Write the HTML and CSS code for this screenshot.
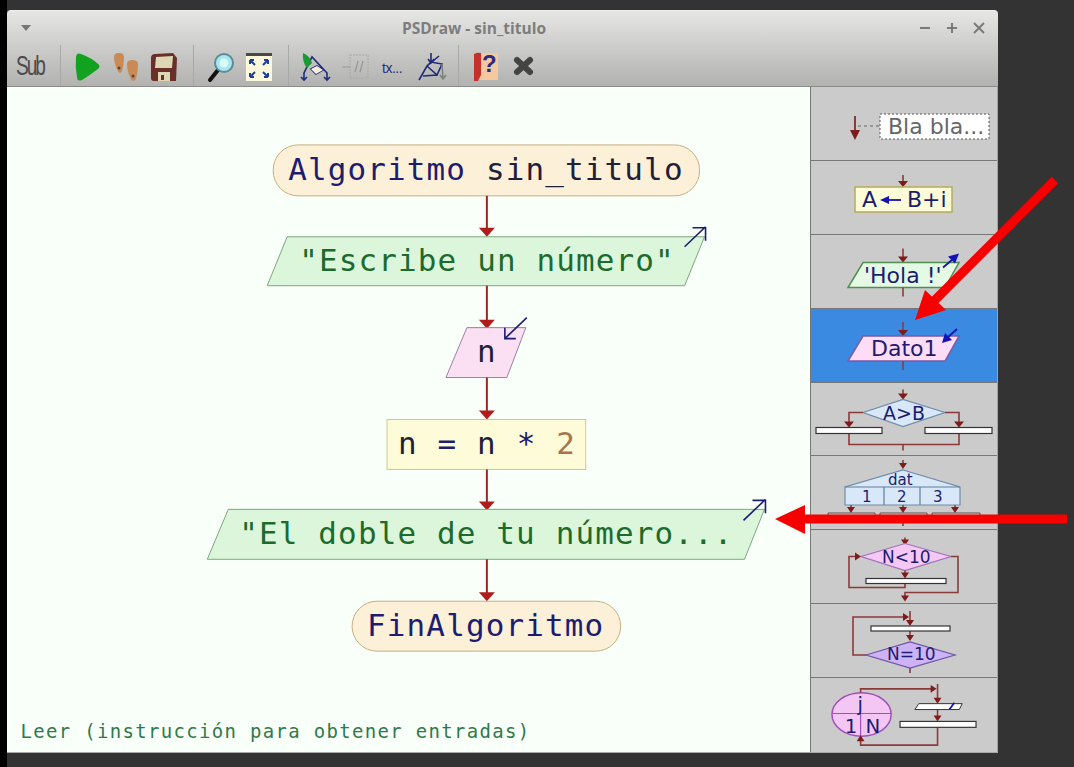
FILE: index.html
```html
<!DOCTYPE html>
<html lang="es">
<head>
    <meta charset="utf-8">
    <meta name="viewport" content="width=device-width, initial-scale=1.0">
    <title>PSDraw - sin_titulo</title>
    <link rel="stylesheet" href="styles.css">
</head>
<body>
    <div class="window">
        <header class="top">
            <div class="titlebar">
                <svg class="caret" width="10" height="6" viewBox="0 0 10 6"><polygon points="0,0 10,0 5,6"/></svg>
                <span class="title">PSDraw - sin_titulo</span>
                <div class="controls">
                    <svg width="12" height="12" viewBox="0 0 12 12"><path d="M1 6H11"/></svg>
                    <svg width="12" height="12" viewBox="0 0 12 12"><path d="M1 6H11M6 1V11"/></svg>
                    <svg width="12" height="12" viewBox="0 0 12 12"><path d="M1 1L11 11M11 1L1 11"/></svg>
                </div>
            </div>
            <div class="toolbar">
                <div class="group"><span class="sub">Sub</span></div>
                <div class="group">
                    <svg class="icon" viewBox="0 0 28 32"><path class="i-play" d="M2 8Q2 2 7 4Q18 8 24 14Q27 16 24 19Q16 25 8 30Q3 32 3 27Q1 17 2 8Z"/></svg>
                    <svg class="icon" viewBox="0 0 28 32">
                        <path class="i-foot" d="M2 7Q2 3 7 3Q12 3 12 7Q12 14 10 21Q8 25 6 21Q2 14 2 7Z"/>
                        <path class="i-foot" d="M15 14Q15 10 20 10Q26 10 26 14Q26 22 24 29Q21 33 19 29Q15 22 15 14Z"/>
                        <circle class="i-dark" cx="7" cy="18" r="1.5"/>
                        <circle class="i-dark" cx="21" cy="26" r="1.5"/>
                    </svg>
                    <svg class="icon" viewBox="0 0 28 32">
                        <path class="i-disk" d="M1 8Q1 4 5 4L23 3L27 8L26 31H4Q1 31 1 28Z"/>
                        <path class="i-label" d="M6 7L23 6L22 18L5 18Z"/>
                        <rect class="i-label" x="8" y="22" width="12" height="9"/>
                        <rect class="i-disk" x="11" y="25" width="3" height="5"/>
                    </svg>
                </div>
                <div class="group">
                    <svg class="icon" viewBox="0 0 28 32">
                        <path class="i-handle" d="M3 30L11 20"/>
                        <circle class="i-lens" cx="17" cy="13" r="9"/>
                        <circle class="i-shine" cx="17" cy="13" r="4.5"/>
                    </svg>
                    <svg class="icon" viewBox="0 0 28 32">
                        <rect class="i-fit" x="1" y="5" width="26" height="26"/>
                        <rect class="i-band" x="1" y="3" width="26" height="3"/>
                        <path class="i-blue" d="M5 10L10 15M5 10H9M5 10V14M23 10L18 15M23 10H19M23 10V14M5 27L10 22M5 27H9M5 27V23M23 27L18 22M23 27H19M23 27V23"/>
                    </svg>
                </div>
                <div class="group wide">
                    <svg class="icon" viewBox="0 0 28 32">
                        <path class="i-line" d="M2 30V23L10 7L25 23V30M9 19L15 16L21 20L14 24Z"/>
                        <path class="i-line" d="M-1 27L2 30L5 27M22 27L25 30L28 27"/>
                        <polygon class="i-white" points="9,19 15,16 21,20 14,24"/>
                        <path class="i-leaf" d="M1 3Q8 6 10 13L5 18Q0 12 1 3Z"/>
                    </svg>
                    <svg class="icon" viewBox="0 0 28 32">
                        <path class="i-faint" d="M9 5H27V28H9Z"/>
                        <path class="i-faintline" d="M1 17H9M14 22L17 11M19 22L22 11"/>
                    </svg>
                    <svg class="icon" viewBox="0 0 28 32"><text class="i-text" x="2" y="23">tx...</text></svg>
                    <svg class="icon" viewBox="0 0 28 32">
                        <path class="i-line" d="M0 30L8 16L20 6M8 16L18 25L23 14L12 12ZM18 25L4 26M12 3V13M9 9L12 13L15 9"/>
                        <path class="i-grey" d="M23 14L24 29M21 25L24 29L27 25"/>
                    </svg>
                </div>
                <div class="group last">
                    <svg class="icon" viewBox="0 0 28 32">
                        <rect class="i-book" x="3" y="3" width="23" height="27"/>
                        <path class="i-spine" d="M2 4Q6 2 9 3V25L6 31L2 31Z"/>
                        <text class="i-help" x="10" y="22">?</text>
                    </svg>
                    <svg class="icon" viewBox="0 0 28 32"><path class="i-x" d="M7 10L20 22M20 10L7 22"/></svg>
                </div>
            </div>
        </header>

        <main class="main">
            <div class="canvas">
                <svg class="chart" viewBox="7 87 803 665">
                    <rect class="term" x="273" y="145" width="427" height="51" rx="25"/>
                    <text class="code" x="288" y="180"><tspan class="navy">Algoritmo</tspan> <tspan class="ink">sin_titulo</tspan></text>

                    <path class="flow" d="M487 196V229"/>
                    <polygon class="head" points="479,228 495,228 487,237"/>

                    <polygon class="output" points="287,237 705,237 685,286 267,286"/>
                    <text class="code green" x="299" y="271">"Escribe un número"</text>
                    <path class="mark" d="M685 247L706 227M693 228H706V241"/>

                    <path class="flow" d="M487 286V321"/>
                    <polygon class="head" points="479,320 495,320 487,329"/>

                    <polygon class="input" points="467,328 526,328 507,378 446,378"/>
                    <text class="code ink" x="477" y="362">n</text>
                    <path class="mark" d="M527 318L505 339M505 328V339H516"/>

                    <path class="flow" d="M487 378V412"/>
                    <polygon class="head" points="479,411 495,411 487,420"/>

                    <rect class="assign" x="387" y="420" width="199" height="50"/>
                    <text class="code ink" x="398" y="455">n <tspan class="navy">=</tspan> n <tspan class="navy">*</tspan> <tspan class="num">2</tspan></text>

                    <path class="flow" d="M487 470V503"/>
                    <polygon class="head" points="479,502 495,502 487,511"/>

                    <polygon class="output" points="228,510 765,510 745,560 207,560"/>
                    <text class="code green" x="239" y="545">"El doble de tu número...</text>
                    <path class="mark" d="M744 521L766 500M753 501H766V514"/>

                    <path class="flow" d="M487 560V594"/>
                    <polygon class="head" points="479,593 495,593 487,602"/>

                    <rect class="term" x="352" y="602" width="269" height="50" rx="25"/>
                    <text class="code navy" x="367" y="637">FinAlgoritmo</text>

                    <text class="status" x="20" y="739">Leer (instrucción para obtener entradas)</text>
                </svg>
            </div>

            <aside class="palette">
                <div class="item">
                    <svg viewBox="810 87 188 74">
                        <path class="p-flow thick" d="M855 116V132"/>
                        <polygon class="p-head" points="850,130 860,130 855,140"/>
                        <path class="p-dash" d="M858 126H880"/>
                        <rect class="p-note" x="880" y="114" width="109" height="25"/>
                        <text class="p-text grey" x="888" y="134">Bla bla...</text>
                    </svg>
                </div>
                <div class="item">
                    <svg viewBox="810 161 188 74">
                        <path class="p-flow" d="M903 175V183"/>
                        <polygon class="p-head" points="898,181 908,181 903,187"/>
                        <rect class="p-assign" x="855" y="187" width="97" height="25"/>
                        <text class="p-text navy" x="862" y="207">A</text>
                        <path class="p-blue" d="M884 200H901"/>
                        <polygon class="p-bluehead" points="880,200 889,196 889,204"/>
                        <text class="p-text navy" x="907" y="207">B+i</text>
                    </svg>
                </div>
                <div class="item">
                    <svg viewBox="810 235 188 73">
                        <path class="p-flow" d="M903 248V258"/>
                        <polygon class="p-head" points="898,256 908,256 903,262"/>
                        <polygon class="p-output" points="863,262 959,262 945,287 848,287"/>
                        <text class="p-text navy" x="864" y="282">'Hola !'</text>
                        <path class="p-flow" d="M903 287V296"/>
                        <path class="p-blue" d="M943 267L956 256"/>
                        <polygon class="p-bluehead" points="959,253 948,256 955,263"/>
                    </svg>
                </div>
                <div class="item selected">
                    <svg viewBox="810 309 188 74">
                        <path class="p-flow" d="M903 322V332"/>
                        <polygon class="p-head" points="898,330 908,330 903,336"/>
                        <polygon class="p-input" points="863,336 959,336 945,361 848,361"/>
                        <text class="p-text navy" x="871" y="356">Dato1</text>
                        <path class="p-flow" d="M903 361V370"/>
                        <path class="p-blue" d="M957 329L946 339"/>
                        <polygon class="p-bluehead" points="942,343 945,333 952,340"/>
                    </svg>
                </div>
                <div class="item">
                    <svg viewBox="810 383 188 73">
                        <path class="p-flow" d="M903 389V395"/>
                        <polygon class="p-head" points="898,393 908,393 903,399"/>
                        <polygon class="p-decide" points="863,412 903,399 945,412 903,426"/>
                        <text class="p-cond large navy" x="883" y="419">A&gt;B</text>
                        <path class="p-flow" d="M863 412H849V423M945 412H959V423M849 433V444H959V433M903 444V450"/>
                        <polygon class="p-head" points="844,421 854,421 849,427"/>
                        <polygon class="p-head" points="954,421 964,421 959,427"/>
                        <rect class="p-bar" x="816" y="427" width="66" height="6"/>
                        <rect class="p-bar" x="925" y="427" width="67" height="6"/>
                    </svg>
                </div>
                <div class="item">
                    <svg viewBox="810 456 188 74">
                        <path class="p-flow" d="M903 460V465"/>
                        <polygon class="p-head" points="899,463 907,463 903,469"/>
                        <polygon class="p-decide" points="903,470 960,487 960,505 845,505 845,487"/>
                        <path class="p-cell" d="M845 487H960M884 487V505M920 487V505"/>
                        <text class="p-small navy" x="888" y="485">dat</text>
                        <text class="p-small navy" x="862" y="502">1</text>
                        <text class="p-small navy" x="897" y="502">2</text>
                        <text class="p-small navy" x="933" y="502">3</text>
                        <path class="p-flow" d="M851 505V509M903 505V509M955 505V509M903 520V526"/>
                        <polygon class="p-head" points="847,507 855,507 851,513"/>
                        <polygon class="p-head" points="899,507 907,507 903,513"/>
                        <polygon class="p-head" points="951,507 959,507 955,513"/>
                        <path class="p-box" d="M828 520V513H875V520M880 520V513H927V520M932 520V513H980V520"/>
                    </svg>
                </div>
                <div class="item">
                    <svg viewBox="810 530 188 73">
                        <path class="p-flow" d="M905 537V541"/>
                        <polygon class="p-head" points="901,539 909,539 905,545"/>
                        <polygon class="p-while" points="861,556 905,543 951,556 905,570"/>
                        <text class="p-cond navy" x="882" y="562">N&lt;10</text>
                        <path class="p-flow" d="M905 570V574M905 583V587H849V556H856M951 556H958V592H905V597"/>
                        <polygon class="p-head" points="901,572 909,572 905,578"/>
                        <polygon class="p-head" points="855,552 861,556 855,560"/>
                        <polygon class="p-head" points="901,595 909,595 905,601"/>
                        <rect class="p-bar" x="866" y="578" width="80" height="5"/>
                    </svg>
                </div>
                <div class="item">
                    <svg viewBox="810 603 188 74">
                        <path class="p-flow" d="M910 610V621M904 616H853V654H867M910 630V636M910 667V672"/>
                        <polygon class="p-head" points="903,612 909,616 903,620"/>
                        <polygon class="p-head" points="906,619 914,619 910,625"/>
                        <polygon class="p-head" points="906,634 914,634 910,640"/>
                        <rect class="p-bar" x="871" y="625" width="79" height="5"/>
                        <polygon class="p-until" points="866,654 910,641 955,654 910,667"/>
                        <text class="p-cond navy" x="887" y="659">N=10</text>
                    </svg>
                </div>
                <div class="item">
                    <svg viewBox="810 677 188 75">
                        <ellipse class="p-for" cx="861" cy="714" rx="30" ry="22"/>
                        <path class="p-forline" d="M831 713H891M860 713V736"/>
                        <text class="p-for-text navy" x="857" y="710">j</text>
                        <text class="p-for-text navy" x="844" y="733">1</text>
                        <text class="p-for-text navy" x="865" y="733">N</text>
                        <path class="p-flow" d="M860 692V688H932M938 683V698M938 709V716M938 727V745H860V740"/>
                        <polygon class="p-head" points="931,684 937,688 931,692"/>
                        <polygon class="p-head" points="934,697 942,697 938,703"/>
                        <polygon class="p-head" points="934,715 942,715 938,721"/>
                        <polygon class="p-head" points="856,741 864,741 860,735"/>
                        <polygon class="p-step" points="919,703 963,703 960,709 915,709"/>
                        <path class="p-blue" d="M950 709L955 702"/>
                        <rect class="p-bar" x="900" y="721" width="77" height="6"/>
                    </svg>
                </div>
            </aside>
        </main>
    </div>

    <svg class="callouts" width="1074" height="767" viewBox="0 0 1074 767">
        <path class="callout" d="M1055 180L930 305"/>
        <polygon class="callout-head" points="915,320 925,290 946,310"/>
        <path class="callout" d="M1067 519H800"/>
        <polygon class="callout-head" points="775,519 805,505 805,534"/>
    </svg>
</body>
</html>
```

FILE: styles.css
```css
body {
    margin: 0;
    width: 1067px;
    height: 767px;
    padding-top: 10px;
    box-sizing: border-box;
    border-left: 7px solid #000;
    background-color: #333;
    overflow: hidden;
    font-family: "Open Sans", "Liberation Sans", sans-serif;
}

.window {
    width: 991px;
    height: 742px;
    display: flex;
    flex-direction: column;
    border-bottom: 1px solid #aaa;
}

.top {
    height: 77px;
    flex: none;
    box-sizing: border-box;
    border-top: 1px solid #eee;
    border-bottom: 1px solid #8b8b88;
    border-radius: 4px 4px 0 0;
    background: linear-gradient(#e6e6e5, #c6c6c5 60%, #b2b2b0);
}

.titlebar {
    height: 34px;
    padding: 0 13px 0 14px;
    display: flex;
    align-items: center;
    justify-content: space-between;
}

.caret {
    fill: #777;
}

.title {
    position: relative;
    left: -1px;
    font-size: 15.5px;
    font-weight: 700;
    color: #7d7d7d;
}

.controls {
    display: flex;
    gap: 15px;
}

.controls path {
    fill: none;
    stroke: #7a7a7a;
    stroke-width: 2;
}

.toolbar {
    height: 41px;
    padding-left: 9px;
    display: flex;
    align-items: center;
}

.group {
    height: 100%;
    padding: 0 15px 0 13px;
    display: flex;
    align-items: center;
    gap: 10px;
    border-right: 1px solid #a8a8a6;
}

.group:first-child {
    padding: 0 16px 0 0;
}

.group.wide {
    gap: 11px;
    padding-right: 11px;
}

.group.last {
    border-right: 0;
}

.sub {
    width: 28px;
    font-family: "Liberation Sans", sans-serif;
    font-size: 28px;
    letter-spacing: -3px;
    color: #4c4c4c;
    transform: scaleX(0.68);
    transform-origin: left center;
}

.icon {
    width: 28px;
    height: 32px;
    flex: none;
    overflow: visible;
}

.i-play { fill: #11a31f; }
.i-foot { fill: #c98a56; }
.i-dark { fill: #5d4030; }
.i-disk { fill: #6a2f2b; }
.i-label { fill: #ddd7b4; }
.i-handle { stroke: #111; stroke-width: 4; stroke-linecap: round; }
.i-lens { fill: #a9e6ee; stroke: #5b8a9a; stroke-width: 2; }
.i-shine { fill: #d8fbfb; }
.i-fit { fill: #fbf8dc; }
.i-band { fill: #4a4a44; }
.i-blue { fill: none; stroke: #1d3f9a; stroke-width: 2; }
.i-line { fill: none; stroke: #1e2a7a; stroke-width: 1.6; }
.i-white { fill: #f4f0d8; }
.i-leaf { fill: #1a9a32; }
.i-faint { fill: none; stroke: #a8a8a4; stroke-width: 1; stroke-dasharray: 2 1; }
.i-faintline { fill: none; stroke: #969693; stroke-width: 1.2; }
.i-grey { fill: none; stroke: #808080; stroke-width: 1.6; }
.i-text { font-family: "Liberation Sans", sans-serif; font-size: 14px; fill: #27307e; letter-spacing: -0.5px; }
.i-book { fill: #f4c9a0; }
.i-spine { fill: #c5302a; }
.i-help { font-family: "Liberation Sans", sans-serif; font-size: 24px; font-weight: 700; fill: #2a2a8a; }
.i-x { stroke: #444; stroke-width: 6; stroke-linecap: round; }

.main {
    flex: 1;
    min-height: 0;
    display: flex;
}

.canvas {
    flex: 1;
    background-color: #f9fff9;
}

.chart {
    display: block;
    width: 803px;
    height: 664px;
}

.code {
    font-family: "DejaVu Sans Mono", monospace;
    font-size: 31px;
    letter-spacing: 1.15px;
}

.navy { fill: #1c1c70; }
.ink { fill: #20203a; }
.green { fill: #1d6b2c; }
.num { fill: #a8744a; }
.grey { fill: #666; }

.term { fill: #fdf0d8; stroke: #c4b07e; }
.output { fill: #dcf6dc; stroke: #7da67d; }
.input { fill: #fbdff2; stroke: #9a80a2; }
.assign { fill: #fdfbd8; stroke: #d0c98a; }
.flow { fill: none; stroke: #a52323; stroke-width: 2; }
.head { fill: #b01c1c; }
.mark { fill: none; stroke: #1c1c70; stroke-width: 1.6; }

.status {
    font-family: "DejaVu Sans Mono", monospace;
    font-size: 19px;
    letter-spacing: 1.33px;
    fill: #2f7a4c;
}

.palette {
    width: 188px;
    flex: none;
    box-sizing: border-box;
    display: grid;
    grid-template-rows: repeat(9, 1fr);
    border-left: 1px solid #777;
    border-right: 1px solid #a3a3a3;
    background-color: #cbcbcb;
}

.item {
    min-height: 0;
    overflow: hidden;
    border-bottom: 1px solid #777;
}

.item:last-child {
    border-bottom: 0;
}

.item.selected {
    background-color: #3a8ae2;
}

.item svg {
    display: block;
    width: 188px;
    height: 74px;
    margin-left: -1px;
}

.p-text {
    font-family: "DejaVu Sans", sans-serif;
    font-size: 22px;
}

.p-cond {
    font-family: "DejaVu Sans", sans-serif;
    font-size: 17px;
}

.p-cond.large {
    font-size: 19px;
}

.p-for-text {
    font-family: "DejaVu Sans", sans-serif;
    font-size: 20px;
}

.p-small {
    font-family: "DejaVu Sans", sans-serif;
    font-size: 15px;
}

.p-flow { fill: none; stroke: #8c3a3a; stroke-width: 1.6; }
.p-flow.thick { stroke-width: 2; }
.p-head { fill: #7c1c1c; }
.p-dash { fill: none; stroke: #666; stroke-dasharray: 3 3; }
.p-note { fill: #fff; stroke: #555; stroke-dasharray: 2 2; }
.p-assign { fill: #fdfcd8; stroke: #b3ad5c; stroke-width: 1.5; }
.p-blue { fill: none; stroke: #1414b4; stroke-width: 1.8; }
.p-bluehead { fill: #1414b4; }
.p-output { fill: #e4fae4; stroke: #4f8f4f; stroke-width: 1.5; }
.p-input { fill: #fcdcf6; stroke: #7a5aa8; stroke-width: 1.5; }
.p-decide { fill: #d9e8f8; stroke: #6f8ca8; stroke-width: 1.2; }
.p-cell { fill: none; stroke: #5f7f98; stroke-width: 1.2; }
.p-box { fill: none; stroke: #555; }
.p-bar { fill: #fff; stroke: #333; stroke-width: 1.2; }
.p-while { fill: #f6c8f6; stroke: #a070b8; stroke-width: 1.2; }
.p-until { fill: #cdb2f5; stroke: #6d55a8; stroke-width: 1.2; }
.p-for { fill: #f4c6f4; stroke: #a050b8; stroke-width: 1.5; }
.p-forline { fill: none; stroke: #a050b8; stroke-width: 1.2; }
.p-step { fill: #fff; stroke: #333; }

.callouts {
    position: absolute;
    top: 0;
    left: 0;
    pointer-events: none;
}

.callout {
    fill: none;
    stroke: #f60000;
    stroke-width: 9;
}

.callout-head {
    fill: #f60000;
}
```
